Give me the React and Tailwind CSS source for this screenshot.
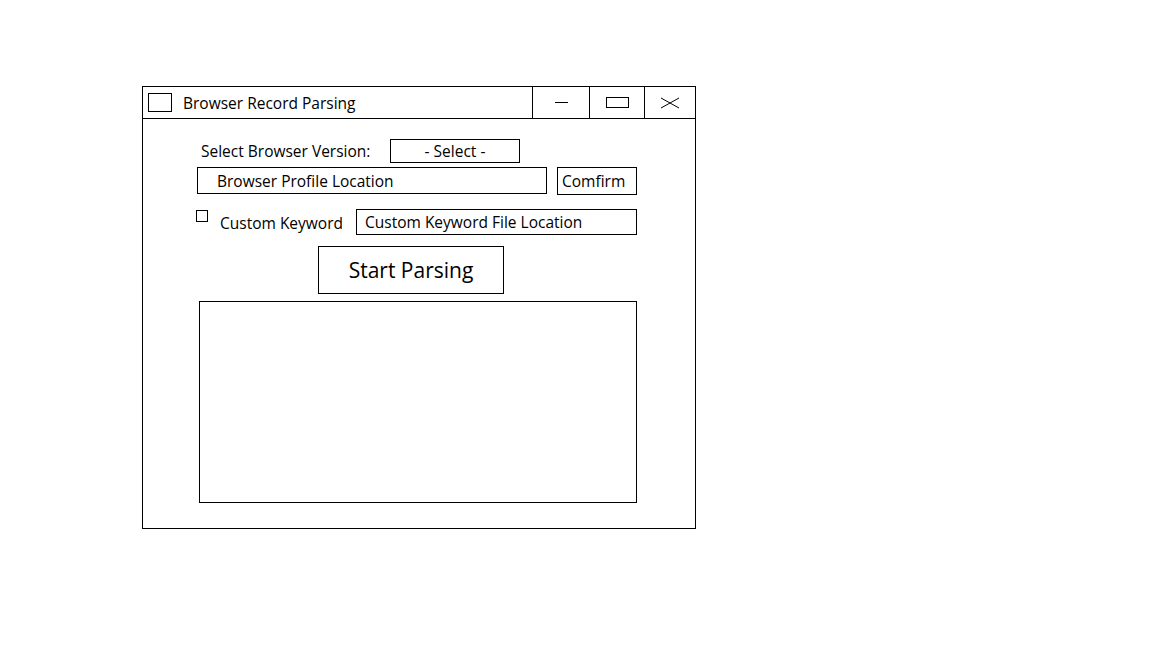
export default function App() {
  return (
    <div
      className="w-[1152px] h-[648px] bg-white pt-[86px] pl-[142px] text-black"
      style={{ fontFamily: '"Open Sans", "Noto Sans", sans-serif' }}
    >
      <div className="w-[554px] h-[443px] border border-black flex flex-col">
        {/* title bar */}
        <div className="h-[32px] border-b border-black flex shrink-0">
          <div className="flex-1 flex items-center">
            <div className="ml-[5px] w-[24px] h-[19px] border border-black" />
            <span className="ml-[11px] pt-[2px] text-[15.5px] leading-none">Browser Record Parsing</span>
          </div>
          <div className="w-[57px] border-l border-black flex items-center justify-center">
            <div className="w-[13px] h-px bg-black" />
          </div>
          <div className="w-[55px] border-l border-black flex items-center justify-center">
            <div className="w-[23px] h-[11px] border border-black" />
          </div>
          <div className="w-[51px] border-l border-black flex items-center justify-center">
            <svg width="20" height="12" viewBox="0 0 20 12">
              <path d="M1 1 L19 11 M19 1 L1 11" stroke="black" strokeWidth="1" fill="none" />
            </svg>
          </div>
        </div>

        {/* body */}
        <div className="flex flex-col text-[15.5px]">
          <div className="flex items-center mt-[20px] h-[24px]">
            <span className="ml-[58px] w-[189px] pt-px">Select Browser Version:</span>
            <div className="w-[130px] h-[24px] border border-black flex items-center justify-center pt-px">
              - Select -
            </div>
          </div>

          <div className="flex mt-[4px] h-[28px]">
            <div className="ml-[54px] w-[350px] h-[27px] border border-black flex items-center pl-[19px] pt-[2px]">
              Browser Profile Location
            </div>
            <div className="ml-[10px] w-[80px] h-[28px] border border-black flex items-center pl-[4px] pt-[2px]">
              Comfirm
            </div>
          </div>

          <div className="flex mt-[14px] h-[26px]">
            <div className="ml-[53px] mt-px w-[12px] h-[12px] border border-black" />
            <span className="ml-[12px] mt-[5px] w-[136px] leading-[18px]">Custom Keyword</span>
            <div className="w-[281px] h-[26px] border border-black flex items-center pl-[8px] pt-[2px]">
              Custom Keyword File Location
            </div>
          </div>

          <div className="ml-[175px] mt-[11px] w-[186px] h-[48px] border border-black flex items-center justify-center text-[21px] pt-px">
            Start Parsing
          </div>

          <div className="ml-[56px] mt-[7px] w-[438px] h-[202px] border border-black" />
        </div>
      </div>
    </div>
  );
}
